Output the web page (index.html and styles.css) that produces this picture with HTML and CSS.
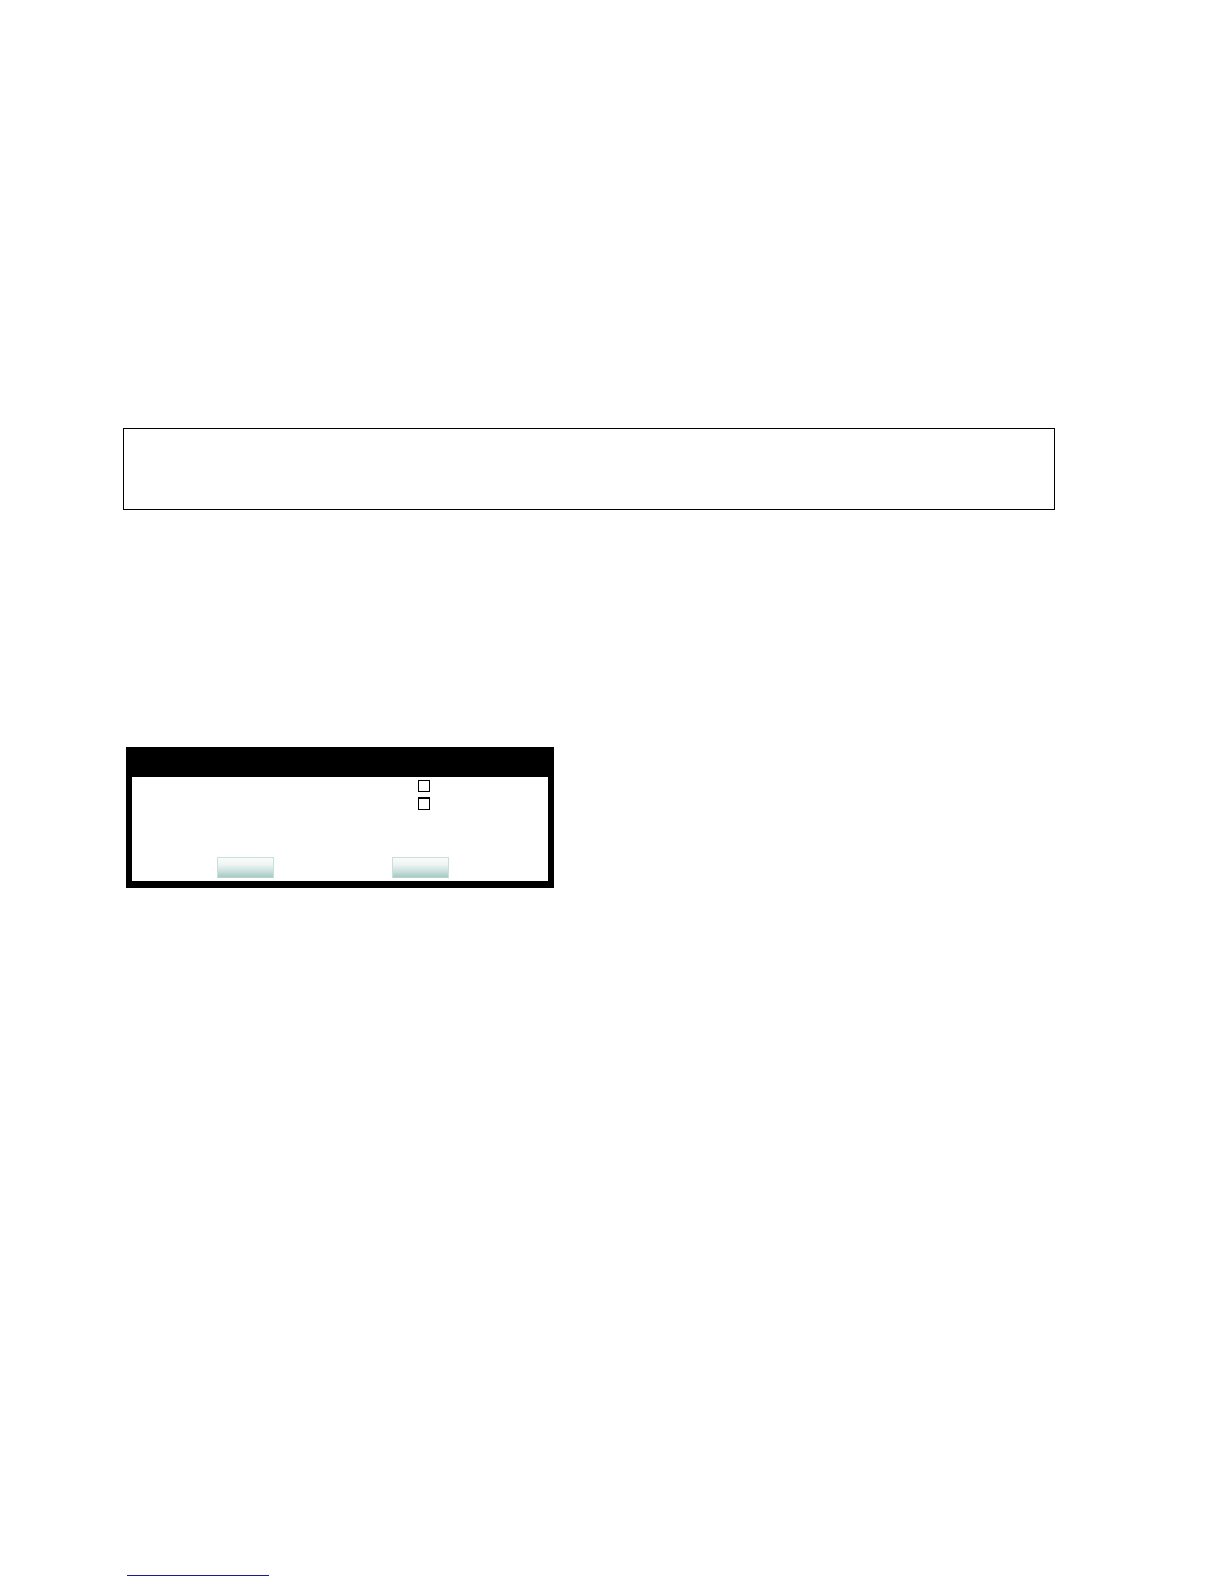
FILE: index.html
```html
<!DOCTYPE html>
<html lang="en">
<head>
<meta charset="utf-8">
<meta name="viewport" content="width=device-width, initial-scale=1">
<link rel="stylesheet" href="styles.css">
</head>
<body>
<main class="page">
  <aside class="note"></aside>
  <form class="dialog">
    <header class="dialog-title"></header>
    <div class="dialog-body">
      <div class="options">
        <label class="option"><input class="check" type="checkbox"></label>
        <label class="option"><input class="check check-heavy" type="checkbox"></label>
      </div>
      <div class="actions">
        <button class="action" type="button"></button>
        <button class="action" type="button"></button>
      </div>
    </div>
  </form>
</main>
<footer class="footer"><a class="footer-link" href="#"></a></footer>
</body>
</html>
```
FILE: styles.css
```css
* {
  box-sizing: border-box;
}

body {
  display: flex;
  flex-direction: column;
  min-height: 100vh;
  margin: 0;
  background: #fff;
  color: #000;
  font-family: "Liberation Sans", Arial, sans-serif;
}

.page {
  flex: 1;
  padding: 428px 169px 0 123px;
}

.note {
  min-height: 82px;
  border: 1px solid #000;
}

.dialog {
  max-width: 428px;
  margin: 237px 0 0 3px;
  border: 6px solid #000;
  border-top: 0;
  border-bottom-width: 7px;
}

.dialog-title {
  min-height: 30px;
  background: #000;
}

.dialog-body {
  padding: 3px 0;
}

.options {
  display: flex;
  flex-direction: column;
  align-items: flex-start;
  gap: 5px;
  padding-left: 286px;
}

.option {
  display: flex;
}

.check {
  appearance: none;
  width: 12px;
  height: 12px;
  margin: 0;
  border: 1px solid #000;
  background: #fff;
}

.check-heavy {
  height: 13px;
  border-top-width: 2px;
}

.actions {
  display: flex;
  gap: 118px;
  margin-top: 47px;
  padding-left: 85px;
}

.action {
  width: 57px;
  height: 21px;
  padding: 0;
  border: 1px solid #c8dfdb;
  border-bottom-color: #b5d3ce;
  border-radius: 1px;
  background: linear-gradient(#fafcfc, #eef4f3 35%, #cfe3e0 65%, #a6cbc5);
}

.footer {
  display: flex;
  padding: 0 0 8px 127px;
}

.footer-link {
  width: 142px;
  height: 16px;
  border-bottom: 1px solid #1a1a94;
}
```
